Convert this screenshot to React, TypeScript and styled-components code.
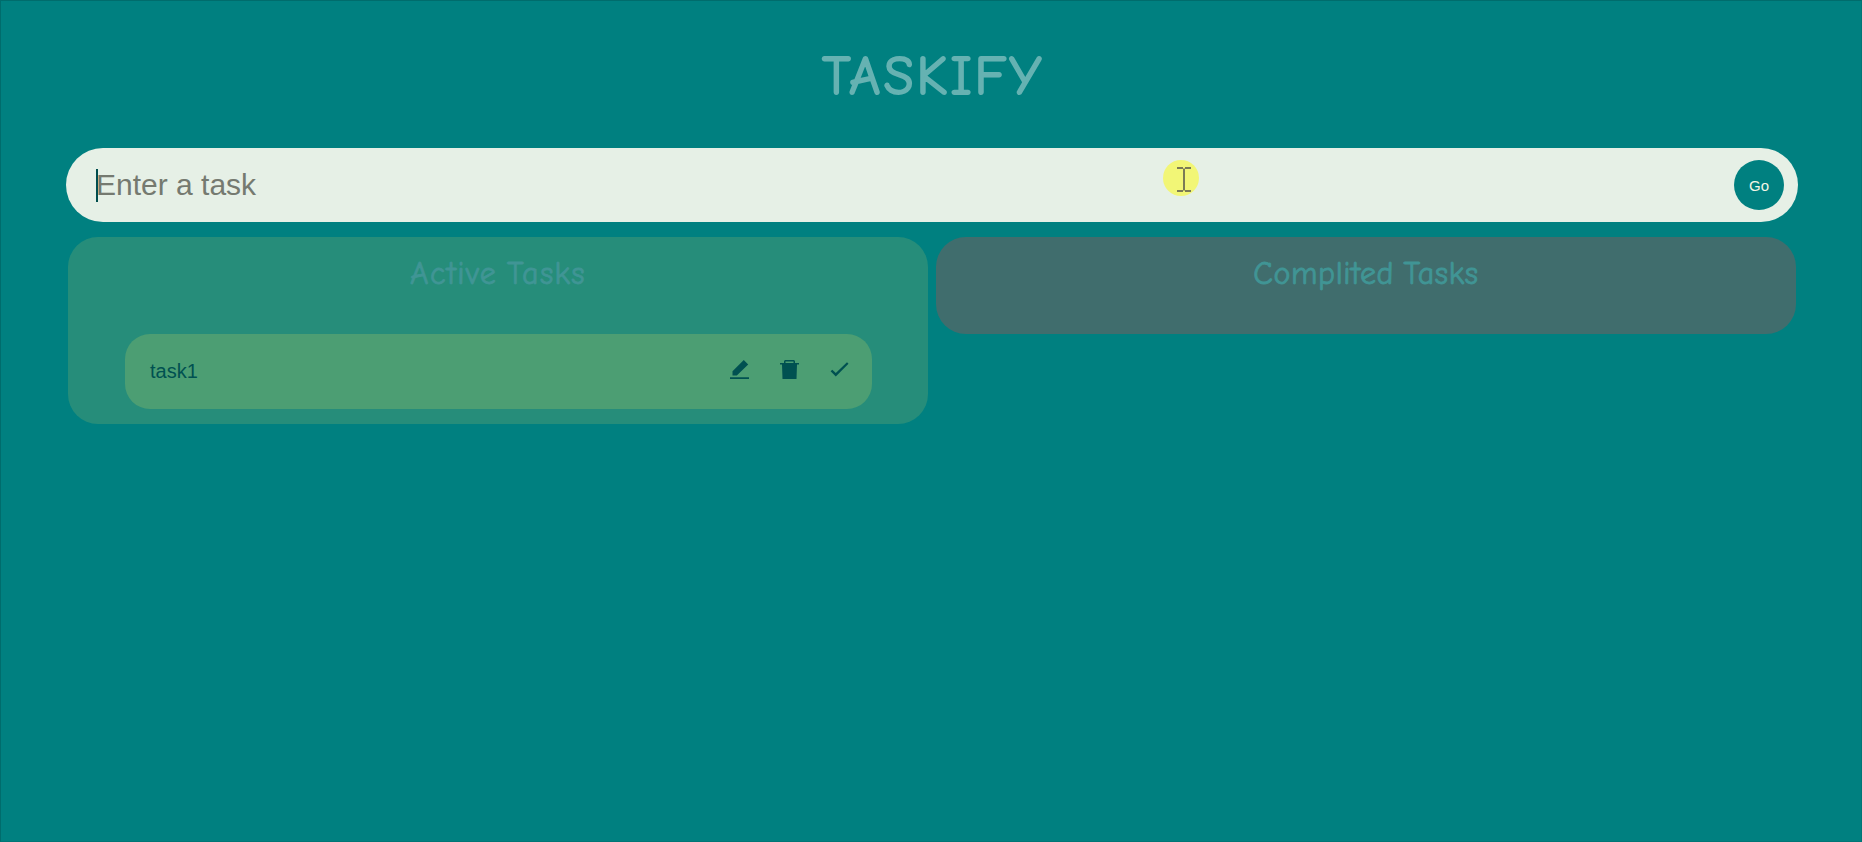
import React from "react";
import styled, { createGlobalStyle } from "styled-components";

const GlobalStyle = createGlobalStyle`
  * { box-sizing: border-box; }
  body { margin: 0; background: #008080; font-family: "Liberation Sans", Arial, sans-serif; }
`;
const Page = styled.main`
  position: relative;
  height: 842px;
  display: flex;
  flex-direction: column;
  align-items: center;
  border: 1px solid #006c6c;
  border-right-color: #007676;
  border-bottom-color: #007676;
  padding-left: 2px;
  overflow: hidden;
`;
const Title = styled.h1`
  margin: 38px 0 0;
  height: 75px;
  line-height: 75px;
  padding-left: 3px;
  font-family: "Comic Sans MS", "Comic Neue", "Open Sans", sans-serif;
  font-weight: 400;
  font-size: 54px;
  letter-spacing: 3.3px;
  color: #66b2b2;
  -webkit-text-stroke: 2px #66b2b2;
`;
const TaskForm = styled.form`
  margin-top: 34px;
  width: 1732px;
  height: 74px;
  padding: 0 14px 0 30px;
  display: flex;
  align-items: center;
  border-radius: 37px;
  background: #e6f0e6;
`;
const Caret = styled.i`
  width: 2px;
  height: 33px;
  margin-right: -2px;
  background: #004d4d;
`;
const TaskInput = styled.input`
  flex: 1;
  height: 60px;
  padding: 0;
  border: 0;
  outline: 0;
  background: transparent;
  font: 30px "Liberation Sans", Arial, sans-serif;
  &::placeholder { color: #757a70; }
`;
const GoButton = styled.button`
  width: 50px;
  height: 50px;
  padding: 0;
  border: 0;
  border-radius: 50%;
  background: #008080;
  color: #f4f6e6;
  font: 15px "Liberation Sans", Arial, sans-serif;
`;
const Columns = styled.section`
  margin-top: 15px;
  width: 1728px;
  display: flex;
  gap: 8px;
  align-items: flex-start;
`;
const Panel = styled.section<{ $tone: string }>`
  flex: 1;
  padding-bottom: 15px;
  border-radius: 30px;
  background: ${(p) => p.$tone};
`;
const PanelTitle = styled.h2<{ $spacing: string }>`
  margin: 0;
  height: 82px;
  line-height: 74px;
  text-align: center;
  font-family: "Comic Sans MS", "Comic Neue", "Open Sans", sans-serif;
  font-size: 32px;
  font-weight: 400;
  letter-spacing: ${(p) => p.$spacing};
  word-spacing: -2px;
  color: #409595;
  -webkit-text-stroke: 0.8px #409595;
`;
const TaskRow = styled.article`
  margin: 15px 56px 0 57px;
  height: 75px;
  padding: 0 20px 0 25px;
  display: flex;
  align-items: center;
  border-radius: 25px;
  background: #4c9e73;
  color: #005151;
  font-size: 20px;
`;
const TaskText = styled.span`
  flex: 1;
  line-height: 24px;
  padding-bottom: 2px;
`;
const Actions = styled.div`
  display: flex;
  gap: 25px;
  margin-top: -5px;
`;
const Icon = styled.svg`
  display: block;
  width: 25px;
  height: 25px;
  fill: currentColor;
`;
const Pointer = styled.svg`
  position: absolute;
  left: 1162px;
  top: 159px;
  width: 36px;
  height: 36px;
`;

export default function App() {
  return (
    <>
      <GlobalStyle />
      <Page>
        <Title>TASKIFY</Title>
        <TaskForm onSubmit={(e) => e.preventDefault()}>
          <Caret />
          <TaskInput placeholder="Enter a task" />
          <GoButton>Go</GoButton>
        </TaskForm>
        <Columns>
          <Panel $tone="#268d7a">
            <PanelTitle $spacing="1.3px">Active Tasks</PanelTitle>
            <TaskRow>
              <TaskText>task1</TaskText>
              <Actions>
                <Icon viewBox="0 0 25 25">
                  <path d="M3 20.3h19v1.8H3zM5.5 18.5v-4.2L16.8 3l4.4 4.4L9.8 18.5z" />
                </Icon>
                <Icon viewBox="0 0 25 25">
                  <path fillRule="evenodd" d="M7 6V4l1-1h9l1 1v2h4v1.6h-2L19.5 22h-14L5 7.6H3V6zM8.5 6h8V4.4h-8z" />
                </Icon>
                <Icon viewBox="0 0 25 25">
                  <path d="M3.6 14.3l1.7-1.6 3.5 3.4L20 5.2l1.5 1.5L8.8 19.6z" />
                </Icon>
              </Actions>
            </TaskRow>
          </Panel>
          <Panel $tone="#406d6d">
            <PanelTitle $spacing="0.6px">Complited Tasks</PanelTitle>
          </Panel>
        </Columns>
        <Pointer viewBox="0 0 36 36">
          <circle cx="18" cy="18" r="18" fill="#f2f676" />
          <path d="M14 8h6m2 0h6M14 31h6m2 0h6M21 8.5v22" fill="none" stroke="#7b7b55" strokeWidth="2" />
        </Pointer>
      </Page>
    </>
  );
}
